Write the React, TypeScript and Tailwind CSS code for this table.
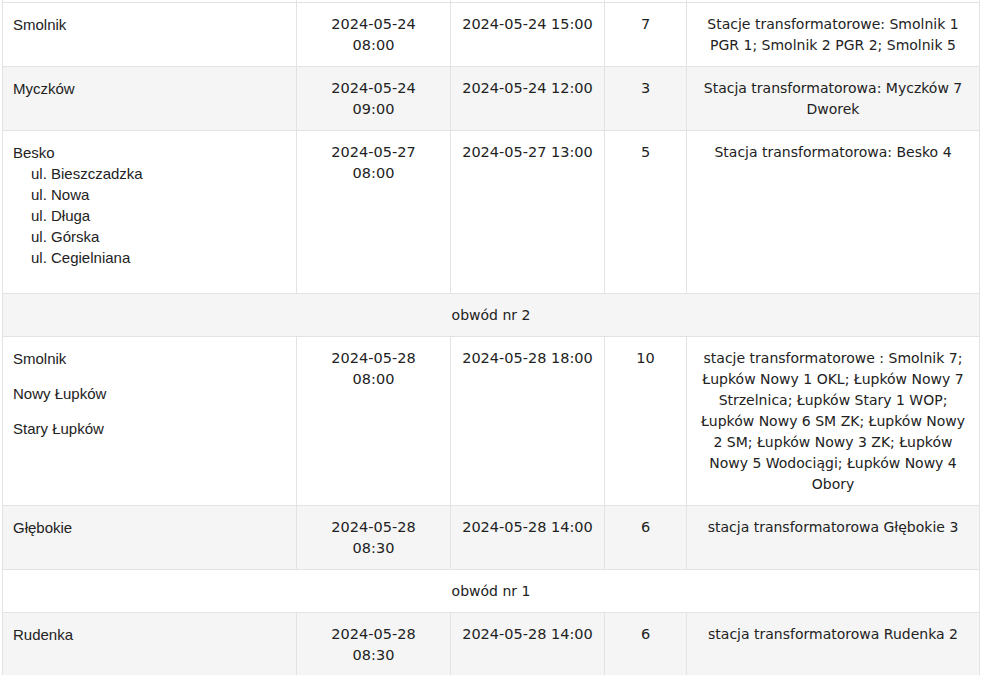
import React from "react";

type Row =
  | { kind: "group"; label: string }
  | {
      kind: "data";
      place: React.ReactNode;
      startDate: string;
      startTime: string;
      end: string;
      count: string;
      stations: string;
    };

const rows: Row[] = [
  {
    kind: "data",
    place: "Smolnik",
    startDate: "2024-05-24",
    startTime: "08:00",
    end: "2024-05-24 15:00",
    count: "7",
    stations: "Stacje transformatorowe: Smolnik 1 PGR 1; Smolnik 2 PGR 2; Smolnik 5",
  },
  {
    kind: "data",
    place: "Myczków",
    startDate: "2024-05-24",
    startTime: "09:00",
    end: "2024-05-24 12:00",
    count: "3",
    stations: "Stacja transformatorowa: Myczków 7 Dworek",
  },
  {
    kind: "data",
    place: (
      <>
        <div>Besko</div>
        <ul className="pl-[18px] mb-[15px] list-none">
          <li>ul. Bieszczadzka</li>
          <li>ul. Nowa</li>
          <li>ul. Długa</li>
          <li>ul. Górska</li>
          <li>ul. Cegielniana</li>
        </ul>
      </>
    ),
    startDate: "2024-05-27",
    startTime: "08:00",
    end: "2024-05-27 13:00",
    count: "5",
    stations: "Stacja transformatorowa: Besko 4",
  },
  { kind: "group", label: "obwód nr 2" },
  {
    kind: "data",
    place: (
      <>
        <p className="mb-[14px]">Smolnik</p>
        <p className="mb-[14px]">Nowy Łupków</p>
        <p>Stary Łupków</p>
      </>
    ),
    startDate: "2024-05-28",
    startTime: "08:00",
    end: "2024-05-28 18:00",
    count: "10",
    stations:
      "stacje transformatorowe : Smolnik 7; Łupków Nowy 1 OKL; Łupków Nowy 7 Strzelnica; Łupków Stary 1 WOP; Łupków Nowy 6 SM ZK; Łupków Nowy 2 SM; Łupków Nowy 3 ZK; Łupków Nowy 5 Wodociągi; Łupków Nowy 4 Obory",
  },
  {
    kind: "data",
    place: "Głębokie",
    startDate: "2024-05-28",
    startTime: "08:30",
    end: "2024-05-28 14:00",
    count: "6",
    stations: "stacja transformatorowa Głębokie 3",
  },
  { kind: "group", label: "obwód nr 1" },
  {
    kind: "data",
    place: "Rudenka",
    startDate: "2024-05-28",
    startTime: "08:30",
    end: "2024-05-28 14:00",
    count: "6",
    stations: "stacja transformatorowa Rudenka 2",
  },
];

const cell =
  "border border-[#e3e3e3] pt-[11px] pb-[10px] px-[10px] align-top leading-[21px]";
const lucida = "font-['DejaVu_Sans',sans-serif]";
const arial = "font-['Liberation_Sans',Arial,sans-serif]";

export default function App() {
  return (
    <div className="w-[987px] h-[675px] overflow-hidden bg-white text-[#222]">
      <table className="ml-[2px] w-[977px] table-fixed border-collapse">
        <colgroup>
          <col className="w-[294px]" />
          <col className="w-[154px]" />
          <col className="w-[154px]" />
          <col className="w-[82px]" />
          <col className="w-[293px]" />
        </colgroup>
        <tbody>
          <tr className="bg-white">
            <td className="h-[2px] p-0 border-x border-b border-[#e3e3e3]" />
            <td className="h-[2px] p-0 border-x border-b border-[#e3e3e3]" />
            <td className="h-[2px] p-0 border-x border-b border-[#e3e3e3]" />
            <td className="h-[2px] p-0 border-x border-b border-[#e3e3e3]" />
            <td className="h-[2px] p-0 border-x border-b border-[#e3e3e3]" />
          </tr>
          {rows.map((r, i) => {
            const bg = i % 2 === 1 ? "bg-[#f5f5f5]" : "bg-white";
            if (r.kind === "group") {
              return (
                <tr key={i} className={bg}>
                  <td
                    colSpan={5}
                    className={`${cell} ${lucida} text-[14px] text-center`}
                  >
                    {r.label}
                  </td>
                </tr>
              );
            }
            return (
              <tr key={i} className={bg}>
                <td className={`${cell} ${arial} text-[15px] text-left`}>{r.place}</td>
                <td className={`${cell} ${lucida} text-[14.5px] text-center`}>
                  {r.startDate}
                  <br />
                  {r.startTime}
                </td>
                <td className={`${cell} ${lucida} text-[14.5px] text-center`}>{r.end}</td>
                <td className={`${cell} ${lucida} text-[14.5px] text-center`}>{r.count}</td>
                <td className={`${cell} ${lucida} text-[14px] text-center`}>{r.stations}</td>
              </tr>
            );
          })}
        </tbody>
      </table>
    </div>
  );
}
